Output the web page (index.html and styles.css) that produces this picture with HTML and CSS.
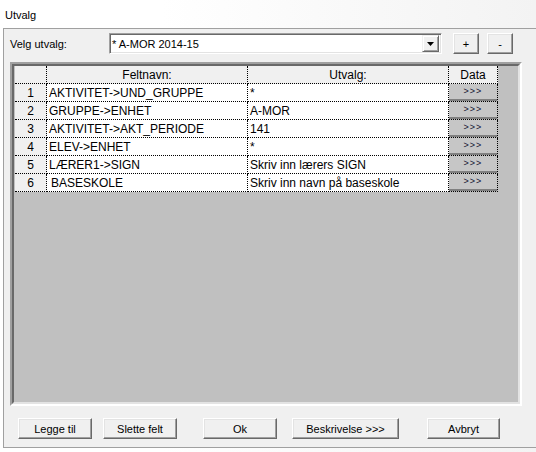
FILE: index.html
```html
<!DOCTYPE html>
<html>
<head>
<meta charset="utf-8">
<title>Utvalg</title>
<link rel="stylesheet" href="styles.css">
</head>
<body>
<div class="title">Utvalg</div>
<div class="panel">
  <div class="toprow">
    <span class="label">Velg utvalg:</span>
    <div class="combo">
      <span class="combo-text">* A-MOR 2014-15</span>
      <span class="drop"><svg width="7" height="4" viewBox="0 0 7 4"><polygon points="0,0 7,0 3.5,4" fill="#000"/></svg></span>
    </div>
    <button class="btn sq plus">+</button>
    <button class="btn sq minus">-</button>
  </div>
  <div class="gridbox">
    <div class="gridinner">
      <div class="grid">
        <div class="cell num"></div>
        <div class="cell hd">Feltnavn:</div>
        <div class="cell hd">Utvalg:</div>
        <div class="cell hd">Data</div>

        <div class="cell num">1</div>
        <div class="cell">AKTIVITET-&gt;UND_GRUPPE</div>
        <div class="cell">*</div>
        <div class="cell data"><div class="gbtn">&gt;&gt;&gt;</div></div>

        <div class="cell num">2</div>
        <div class="cell">GRUPPE-&gt;ENHET</div>
        <div class="cell">A-MOR</div>
        <div class="cell data"><div class="gbtn">&gt;&gt;&gt;</div></div>

        <div class="cell num">3</div>
        <div class="cell">AKTIVITET-&gt;AKT_PERIODE</div>
        <div class="cell">141</div>
        <div class="cell data"><div class="gbtn">&gt;&gt;&gt;</div></div>

        <div class="cell num">4</div>
        <div class="cell">ELEV-&gt;ENHET</div>
        <div class="cell">*</div>
        <div class="cell data"><div class="gbtn">&gt;&gt;&gt;</div></div>

        <div class="cell num">5</div>
        <div class="cell">LÆRER1-&gt;SIGN</div>
        <div class="cell">Skriv inn lærers SIGN</div>
        <div class="cell data"><div class="gbtn">&gt;&gt;&gt;</div></div>

        <div class="cell num">6</div>
        <div class="cell sel">BASESKOLE</div>
        <div class="cell">Skriv inn navn på baseskole</div>
        <div class="cell data"><div class="gbtn">&gt;&gt;&gt;</div></div>
      </div>
    </div>
  </div>
  <div class="buttons">
    <button class="btn bb b1">Legge til</button>
    <button class="btn bb b2">Slette felt</button>
    <button class="btn bb b3">Ok</button>
    <button class="btn bb b4">Beskrivelse &gt;&gt;&gt;</button>
    <button class="btn bb b5">Avbryt</button>
  </div>
</div>
</body>
</html>
```
FILE: styles.css
```css
* { box-sizing: border-box; }
html, body { margin: 0; padding: 0; }
body {
  width: 536px;
  height: 452px;
  overflow: hidden;
  background: linear-gradient(to right, #ffffff 30%, #f3f3f3);
  font-family: "Liberation Sans", Arial, sans-serif;
  font-size: 11px;
  color: #000;
}
.title {
  height: 28px;
  padding: 9px 0 0 5px;
  font-size: 11px;
  line-height: 13px;
}
.panel {
  margin-left: 3px;
  height: 420px;
  border: 1px solid #a0a0a0;
  border-right: none;
  background: #f0f0f0;
  display: flex;
  flex-direction: column;
}
.toprow {
  margin-top: 4px;
  height: 21px;
  display: flex;
  align-items: center;
}
.label {
  width: 105px;
  padding-left: 6px;
}
.combo {
  width: 333px;
  height: 21px;
  border: 1px solid;
  border-color: #a0a0a0 #ffffff #ffffff #a0a0a0;
  box-shadow: inset 1px 1px #696969, inset -1px -1px #e3e3e3;
  background: #fff;
  display: flex;
  align-items: center;
  padding: 2px;
}
.combo-text { flex: 1; padding-top: 1px; }
.drop {
  width: 17px;
  height: 17px;
  background: #f0f0f0;
  border: 1px solid;
  border-color: #f0f0f0 #696969 #696969 #f0f0f0;
  box-shadow: inset 1px 1px #ffffff, inset -1px -1px #a0a0a0;
  display: flex;
  align-items: center;
  justify-content: center;
}
.btn {
  font-family: "Liberation Sans", Arial, sans-serif;
  font-size: 11px;
  color: #000;
  background: #f0f0f0;
  border: 1px solid;
  border-color: #ffffff #696969 #696969 #ffffff;
  box-shadow: inset -1px -1px #a0a0a0, inset 1px 1px #e3e3e3;
  padding: 0;
  margin: 0;
  height: 21px;
}
.sq { width: 26px; }
.plus { margin-left: 11px; }
.minus { margin-left: 8px; }
.gridbox {
  margin: 8px 0 0 6px;
  width: 512px;
  height: 344px;
  border: 2px solid;
  border-color: #a0a0a0 #ffffff #ffffff #a0a0a0;
  background: #c0c0c0;
}
.gridinner {
  height: 100%;
  border: 2px solid;
  border-color: #696969 #e3e3e3 #e3e3e3 #696969;
  padding-left: 1px;
}
.grid {
  display: grid;
  grid-template-columns: 32px 201px 201px 49px;
  grid-auto-rows: 18px;
}
.cell {
  border-right: 1px dotted #000;
  border-bottom: 1px dotted #000;
  background: #fff;
  font-size: 12px;
  line-height: 17px;
  padding: 1px 0 0 2px;
  white-space: nowrap;
  overflow: hidden;
}
.sel { padding-left: 4px; }
.hd, .num {
  background: #f0f0f0;
  text-align: center;
  padding-left: 0;
}
.data {
  padding: 0;
  background: #c0c0c0;
}
.gbtn {
  height: 17px;
  background: #c6c6c6;
  border-bottom: 2px solid #808080;
  font-size: 9px;
  line-height: 15px;
  letter-spacing: 1px;
  text-align: center;
  color: #101030;
}
.buttons {
  display: flex;
  margin-top: 12px;
}
.bb { width: 74px; }
.b1 { margin-left: 14px; }
.b2 { margin-left: 11px; }
.b3 { margin-left: 26px; }
.b4 { margin-left: 15px; width: 107px; }
.b5 { margin-left: 28px; width: 73px; }
```
